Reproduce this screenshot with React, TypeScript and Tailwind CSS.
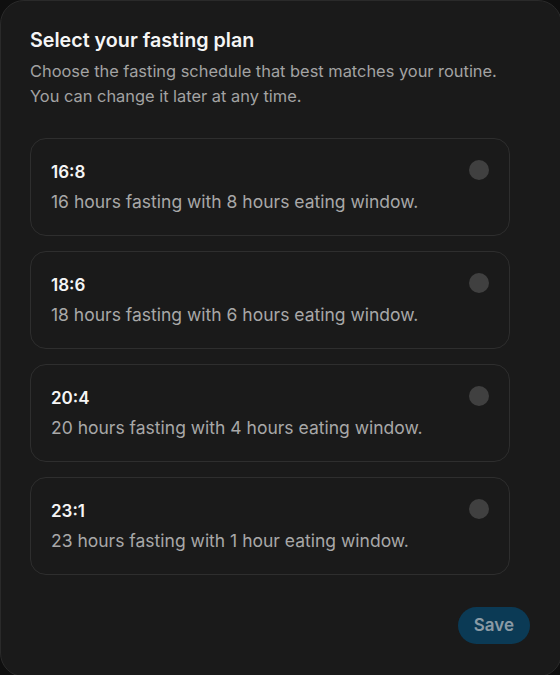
import React from "react";

const plans = [
  { id: "16:8", desc: "16 hours fasting with 8 hours eating window." },
  { id: "18:6", desc: "18 hours fasting with 6 hours eating window." },
  { id: "20:4", desc: "20 hours fasting with 4 hours eating window." },
  { id: "23:1", desc: "23 hours fasting with 1 hour eating window." },
];

export default function App() {
  return (
    <div
      className="h-[675px] w-[560px] overflow-hidden bg-[#0f0f0f]"
      style={{ fontFamily: "Inter, 'Noto Sans', sans-serif" }}
    >
      <div className="flex h-[677px] w-[562px] flex-col rounded-[24px] border border-[#2a2a2a] bg-[#1a1a1a] px-[29px] pt-[25px]">
        <h1 className="text-[19.7px] font-semibold leading-[28px] text-[#f5f5f5]">
          Select your fasting plan
        </h1>
        <p className="mt-[5px] text-[16.4px] leading-[25px] text-[#a3a3a3]">
          Choose the fasting schedule that best matches your routine.
          <br />
          You can change it later at any time.
        </p>
        <div className="mt-[29px] flex w-[480px] flex-col gap-[15px]">
          {plans.map((p) => (
            <div
              key={p.id}
              className="flex items-start justify-between rounded-[16px] border border-[#2e2e2e] bg-[#1a1a1a] px-5 py-[21px]"
            >
              <div>
                <div className="text-[17px] font-semibold leading-[24px] text-[#f5f5f5]">
                  {p.id}
                </div>
                <div className="mt-1.5 text-[17.5px] leading-[24px] text-[#a8a8a8]">
                  {p.desc}
                </div>
              </div>
              <div className="h-5 w-5 rounded-full bg-[#404040]" />
            </div>
          ))}
        </div>
        <div className="mt-[32px] flex w-[500px] justify-end">
          <button className="h-[37px] rounded-full bg-[#0b3a55] px-[16px] text-[17px] font-semibold text-[#8a9aa5]">
            Save
          </button>
        </div>
      </div>
    </div>
  );
}
